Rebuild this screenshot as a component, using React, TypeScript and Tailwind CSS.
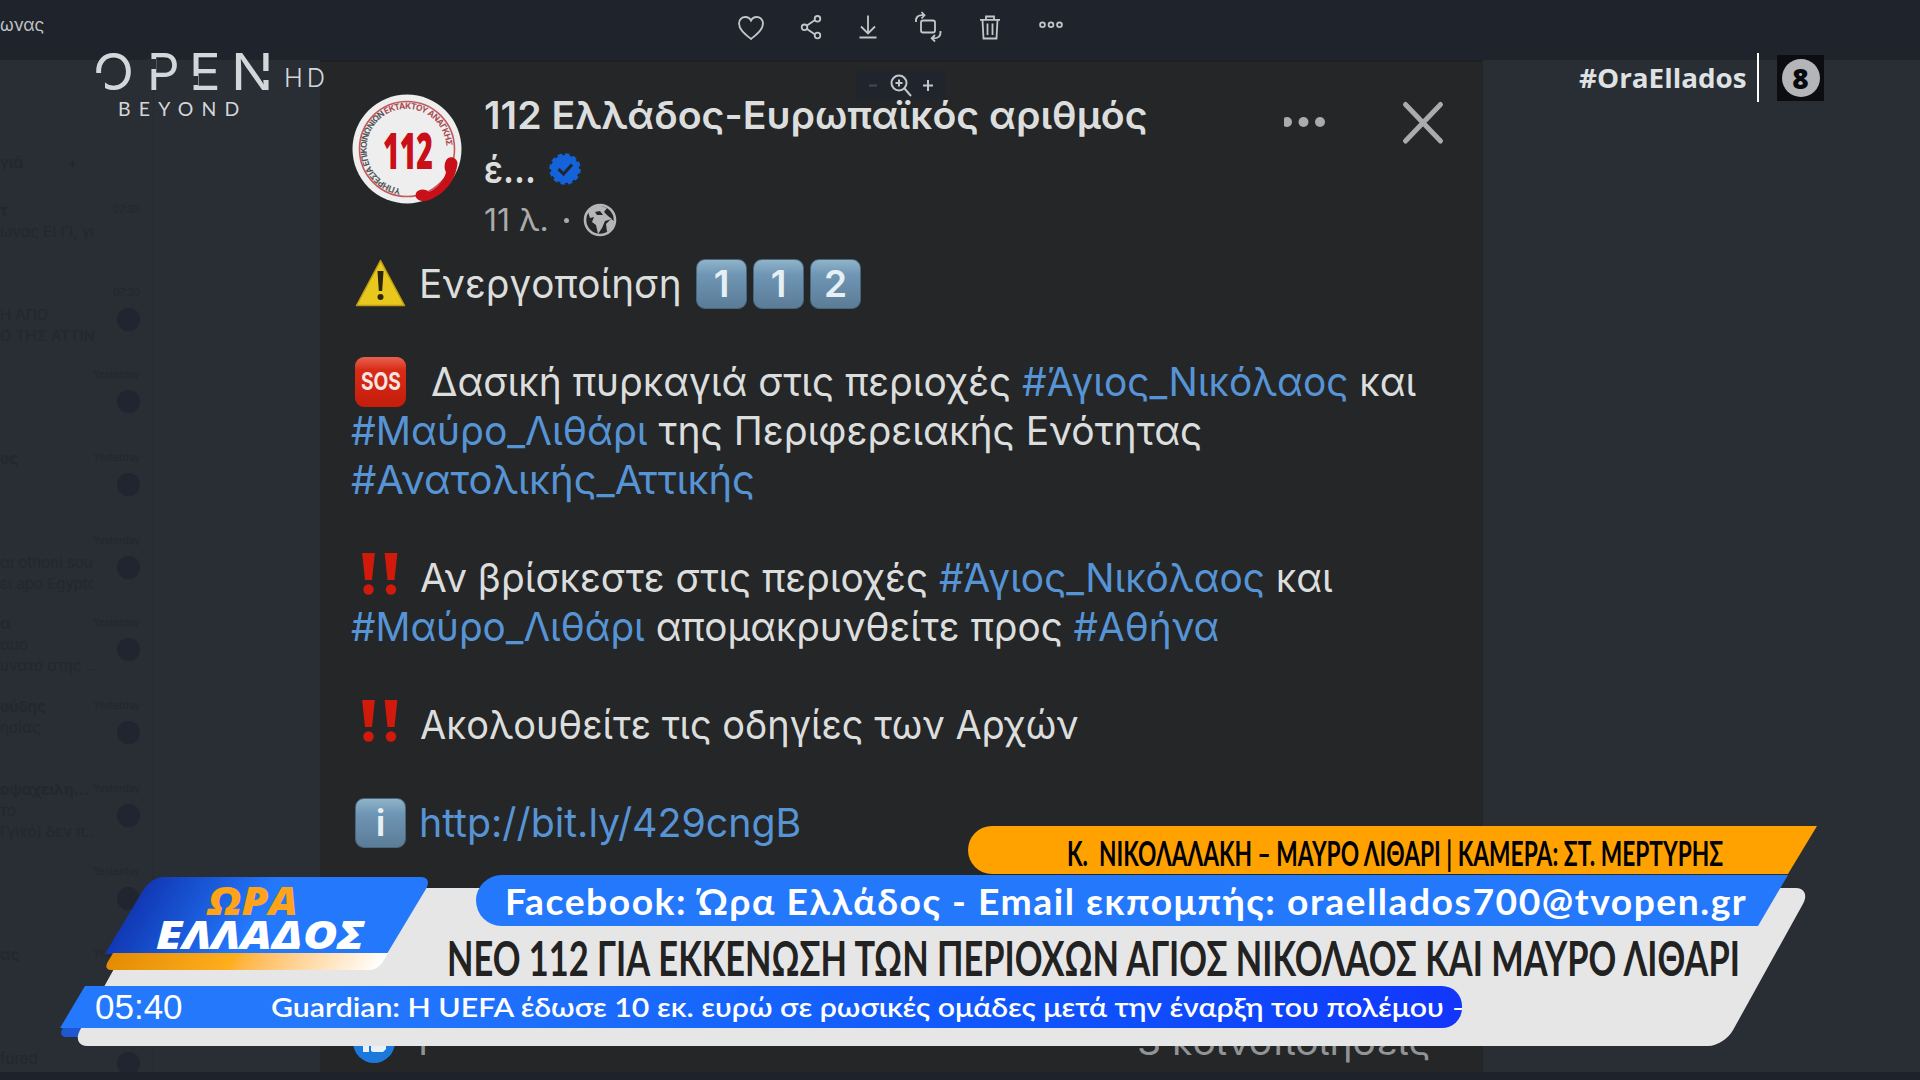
import { useLayoutEffect, useRef, useState } from "react";
import type { ReactNode } from "react";

// Squeezes (or stretches) a single line of text to a given width
function Fit({ width, className = "", children }: { width: number; className?: string; children: ReactNode }) {
    const ref = useRef<HTMLSpanElement>(null);
    const [scale, setScale] = useState(1);

    useLayoutEffect(() => {
        if (ref.current) setScale(width / ref.current.offsetWidth);
    }, [width]);

    return (
        <div className={`shrink-0 ${className}`} style={{ width }}>
            <span
                ref={ref}
                className="inline-block origin-left whitespace-pre"
                style={{ transform: `scaleX(${scale})` }}
            >
                {children}
            </span>
        </div>
    );
}

const chats = [
    { name: "τ", text: "ωνας ΕΙ ΓΙ, για", more: "", time: "07:39", badge: false },
    { name: "", text: "Η ΑΠΟ", more: "Ο ΤΗΣ ΑΤΤΙΝ...", time: "07:30", badge: true },
    { name: "", text: "", more: "", time: "Yesterday", badge: true },
    { name: "ος", text: "", more: "", time: "Yesterday", badge: true },
    { name: "", text: "αι othoni sou", more: "ει apo Egyptο", time: "Yesterday", badge: true },
    { name: "α", text: "αυο", more: "υνατό στης ...", time: "Yesterday", badge: true },
    { name: "ούδης", text: "ησίας", more: "", time: "Yesterday", badge: true },
    { name: "οψαχειλη...", text: "το", more: "Γγικό) δεν π...", time: "Yesterday", badge: true },
    { name: "", text: "", more: "", time: "Yesterday", badge: true },
    { name: "ας", text: "", more: "", time: "Yesterday", badge: true },
    { name: "", text: "fured", more: "", time: "", badge: true },
];

function Sidebar() {
    return (
        <aside className="w-[320px] shrink-0 overflow-hidden">
            <div className="w-[154px] border-r border-[#252a31] pt-[92px] text-[15px] text-[#22282d]">
                <div className="flex h-[48px] gap-11 font-semibold"><span>γιά</span><span>+</span></div>
                {chats.map((chat, i) => (
                    <div key={i} className="flex h-[82.7px] justify-between pr-[13px]">
                        <div className="w-[94px] overflow-hidden whitespace-nowrap leading-[21px]">
                            <p className="h-[21px] font-bold">{chat.name}</p>
                            <p className="h-[21px]">{chat.text}</p>
                            <p className="h-[21px]">{chat.more}</p>
                        </div>
                        <div className="flex flex-col items-end">
                            <span className="h-[25px] text-[10px] leading-[18px]">{chat.time}</span>
                            {chat.badge && <span className="size-[23px] rounded-full bg-[#20252f]" />}
                        </div>
                    </div>
                ))}
            </div>
        </aside>
    );
}

function TopBar() {
    return (
        <header className="flex h-[60px] items-start bg-[#1f242c] text-[#c3c6c9]">
            <div className="w-[738px] pt-[13px] text-[17px] leading-6">ωνας</div>
            <svg
                className="h-[54px] w-[340px]"
                viewBox="738 0 340 54"
                fill="none"
                stroke="currentColor"
                strokeWidth="1.8"
            >
                <path d="M751 39C745 34 739 29.500 739 23.500C739 19.500 742 17 745.300 17C748 17 750 18.500 751 20.500C752 18.500 754 17 756.700 17C760 17 763 19.500 763 23.500C763 29.500 757 34 751 39Z" />
                <path d="M807 25.500L815 20M807 29L815 34.500" />
                <circle cx="804.500" cy="27.300" r="2.800" />
                <circle cx="817.500" cy="18.800" r="2.800" />
                <circle cx="817.500" cy="35.500" r="2.800" />
                <path d="M868 15.500V33M861 26.500L868 33.500L875 26.500M859.500 37.500H876.500" />
                <rect x="921" y="20.500" width="14" height="12" rx="2" />
                <path d="M916 22C915.500 17 918 14.500 924 15.200M921.500 12L924.500 15.300L921.500 18.500M940.500 31C941 36.500 938 38.800 932 38.300M935 35L931.700 38.300L935 41.500" />
                <path d="M980 19.800H1000M986 19.500V16.500H994V19.500M982.500 20L983.500 38.500H996.500L997.500 20M987.500 23.500V35M992.500 23.500V35" />
                <circle cx="1042.500" cy="24.800" r="2.400" />
                <circle cx="1051" cy="24.800" r="2.400" />
                <circle cx="1059.500" cy="24.800" r="2.400" />
            </svg>
        </header>
    );
}

function Avatar() {
    return (
        <svg className="size-[110px] shrink-0" viewBox="0 0 110 110">
            <circle cx="55" cy="55" r="54.500" fill="#eeeeee" />
            <circle cx="55" cy="55" r="47.500" fill="none" stroke="#c4585d" strokeWidth="1.600" />
            <defs>
                <path id="ring" d="M49 94.500A40 40 0 1 1 94.500 56" />
            </defs>
            <text fontSize="8.500" fontWeight="700" fontFamily="Inter, sans-serif" fill="#555">
                <textPath href="#ring" textLength="180">
                    ΥΠΗΡΕΣΙΑ ΕΠΙΚΟΙΝΩΝΙΩΝ <tspan fill="#a84a50">ΕΚΤΑΚΤΟΥ ΑΝΑΓΚΗΣ</tspan>
                </textPath>
            </text>
            <text
                x="31"
                y="74.500"
                fontSize="49"
                fontWeight="900"
                fontFamily="'Open Sans', sans-serif"
                fill="#c90f17"
                textLength="50"
                lengthAdjust="spacingAndGlyphs"
            >
                112
            </text>
            <path
                d="M95 65C99 61 105 64 105.500 69C104 86 92 102 74 107C67 108 62 104 64 99C66 95 73 94 77 98C85 95 93 85 94 78C92 75 92 69 95 65Z"
                fill="#c90f17"
            />
        </svg>
    );
}

function Key({ children }: { children: ReactNode }) {
    return (
        <span className="flex h-[50px] w-[51px] shrink-0 items-center justify-center rounded-[9px] border border-[#48677d] bg-linear-to-b from-[#8fb4c9] via-[#6f96b5] via-30% to-[#5b7c97] text-[37px] font-semibold text-[#e6f0f4]">
            {children}
        </span>
    );
}

function Bangs() {
    return (
        <svg className="h-[49px] w-[51px] shrink-0" viewBox="0 0 51 49" fill="#cf1a0c">
            <path d="M7 -1H20L17 27H10Z" />
            <circle cx="13.500" cy="36.500" r="5.200" />
            <path d="M29.500 -1H42.500L39.500 27H32.500Z" />
            <circle cx="36" cy="36.500" r="5.200" />
        </svg>
    );
}

function Tag({ children }: { children: ReactNode }) {
    return <span className="text-[#5794d6]">{children}</span>;
}

function Post() {
    return (
        <main className="relative w-[1163px] shrink-0 overflow-hidden border-t-2 border-[#1d2122] bg-[#242627] pl-[32px] pt-[26px] text-[#dcdddd]">
            <div className="absolute left-[536px] top-[9px] h-[28px] w-[90px] bg-[#20252d]">
                <svg className="h-full w-full" viewBox="0 0 90 28" fill="none" stroke="#c3c6c9" strokeWidth="2">
                    <path d="M13 14.500H21" stroke="#444b50" />
                    <circle cx="43" cy="12" r="7.500" />
                    <path d="M48.500 17.500L55 25M43 8.500V15.500M39.500 12H46.500M67 14.500H77M72 9V20" />
                </svg>
            </div>

            <div className="flex">
                <div className="w-[132px] pt-[6px]"><Avatar /></div>
                <div className="relative w-[800px]">
                    <Fit width={664} className="h-[54px] text-[38.5px] font-semibold leading-[54px]">
                        112 Ελλάδος-Ευρωπαϊκός αριθμός
                    </Fit>
                    <div className="flex h-[54px] items-center text-[38.5px] font-semibold">
                        <Fit width={52} className="leading-[54px]">έ...</Fit>
                        <svg className="ml-[12px] size-[34px]" viewBox="0 0 34 34">
                            <circle cx="17" cy="17" r="14" fill="#1463d8" stroke="#1463d8" strokeWidth="3.500" strokeDasharray="4.400 2.890" />
                            <path d="M10.500 17L15.500 22L24 12.500" fill="none" stroke="#202630" strokeWidth="3" />
                        </svg>
                    </div>
                    <div className="flex h-[48px] items-center text-[31px] text-[#a9abac]">
                        <Fit width={65} className="leading-[48px]">11 λ.</Fit>
                        <span className="ml-[15px] size-[5px] rounded-full bg-[#a9abac]" />
                        <svg className="ml-[14px] size-[34px]" viewBox="0 0 34 34">
                            <circle cx="17" cy="17" r="15" fill="#242627" stroke="#b4b6b7" strokeWidth="2.600" />
                            <path d="M5 9C8 4 13 2 18 3L24 5L21 9L25 13L29 16L22 18L19 25L15 31L13 22L9 19L11 14L7 15Z" fill="#b4b6b7" />
                            <path d="M12 9L17 8L20 12L14 12Z" fill="#242627" />
                            <path d="M23 21L28 16L31 18C31 23 28 27 24 29Z" fill="#b4b6b7" />
                        </svg>
                    </div>
                </div>
                <svg className="h-[68px] w-[164px]" viewBox="0 0 164 68" fill="#a9abac">
                    <circle cx="3" cy="34" r="5" />
                    <circle cx="19.500" cy="34" r="5" />
                    <circle cx="36" cy="34" r="5" />
                    <path d="M121.500 16.500L156.500 53M156.500 16.500L121.500 53" stroke="#a9abac" strokeWidth="5" strokeLinecap="round" />
                </svg>
            </div>

            <div className="mt-[15px] pl-[3px] text-[40px] leading-[49px] [&>div]:flex [&>div]:h-[49px] [&>div]:items-center">
                <div>
                    <svg className="h-[49px] w-[51px] shrink-0" viewBox="0 0 51 49">
                        <path d="M25.500 1.500L49.500 46.500H1.500Z" fill="#e8c81d" stroke="#bb9c12" strokeWidth="1.500" strokeLinejoin="round" />
                        <path d="M22.500 12H28.500L27.200 32H23.800Z" fill="#2b2410" />
                        <circle cx="25.500" cy="38" r="3" fill="#2b2410" />
                    </svg>
                    <Fit width={263} className="ml-[13px]">Ενεργοποίηση</Fit>
                    <div className="ml-[14px] flex gap-[6px]">
                        <Key>1</Key>
                        <Key>1</Key>
                        <Key>2</Key>
                    </div>
                </div>
                <div />
                <div>
                    <span className="flex h-[50px] w-[51px] shrink-0 items-center justify-center rounded-[9px] bg-linear-to-b from-[#e8604d] via-[#d92c17] via-25% to-[#c41d0b] text-[#f5e4e1]">
                        <Fit width={40} className="text-[24px] font-bold">SOS</Fit>
                    </span>
                    <Fit width={985} className="ml-[25px]">
                        Δασική πυρκαγιά στις περιοχές <Tag>#Άγιος_Νικόλαος</Tag> και
                    </Fit>
                </div>
                <div>
                    <Fit width={851} className="-ml-[4px]"><Tag>#Μαύρο_Λιθάρι</Tag> της Περιφερειακής Ενότητας</Fit>
                </div>
                <div>
                    <Fit width={404} className="-ml-[4px]"><Tag>#Ανατολικής_Αττικής</Tag></Fit>
                </div>
                <div />
                <div>
                    <Bangs />
                    <Fit width={913} className="ml-[14px]">
                        Αν βρίσκεστε στις περιοχές <Tag>#Άγιος_Νικόλαος</Tag> και
                    </Fit>
                </div>
                <div>
                    <Fit width={868} className="-ml-[4px]">
                        <Tag>#Μαύρο_Λιθάρι</Tag> απομακρυνθείτε προς <Tag>#Αθήνα</Tag>
                    </Fit>
                </div>
                <div />
                <div>
                    <Bangs />
                    <Fit width={659} className="ml-[14px]">Ακολουθείτε τις οδηγίες των Αρχών</Fit>
                </div>
                <div />
                <div>
                    <Key>i</Key>
                    <Fit width={382} className="ml-[13px]"><Tag>http://bit.ly/429cngB</Tag></Fit>
                </div>
            </div>

            <div className="mt-[173px] flex h-[44px] items-center text-[37px] text-[#919394]">
                <svg className="size-[44px]" viewBox="0 0 44 44">
                    <circle cx="22" cy="22" r="21" fill="#1d78dc" />
                    <rect x="11" y="18" width="6" height="14" fill="#e9f1f8" />
                    <path d="M19 31V19L23 9H26V17H34V29L31 32H21Z" fill="#e9f1f8" />
                </svg>
                <span className="ml-[17px] w-[724px]">1</span>
                <Fit width={294}>3 κοινοποιήσεις</Fit>
            </div>
        </main>
    );
}

function ChannelLogo() {
    return (
        <div className="absolute left-[93px] top-[48px] text-[#d4d7da]">
            <div className="flex h-[48px] text-[51px] leading-[48px]">
                <div className="relative w-[54px]">
                    <Fit width={41}>O</Fit>
                    <span className="absolute left-0 top-[25px] h-[19px] w-[12px] bg-[#292d34]" />
                </div>
                <div className="relative w-[42px]">
                    <Fit width={33}>P</Fit>
                    <span className="absolute left-0 top-[11px] h-[10px] w-[9px] bg-[#292d34]" />
                </div>
                <div className="relative w-[42px]">
                    <Fit width={32}>E</Fit>
                    <span className="absolute left-0 top-[28px] h-[9px] w-[9px] bg-[#292d34]" />
                </div>
                <div className="relative w-[53px]">
                    <Fit width={42}>N</Fit>
                    <span className="absolute left-[31px] top-[23px] h-[9px] w-[9px] bg-[#292d34]" />
                </div>
                <Fit width={45} className="pt-[6px] text-[26px] font-light tracking-[4px]">HD</Fit>
            </div>
            <Fit width={130} className="ml-[25px] h-[26px] font-[Lato] text-[19px] leading-[26px] tracking-[8px]">BEYOND</Fit>
        </div>
    );
}

function Hashtag() {
    return (
        <div className="absolute left-[1579px] top-[53px] flex h-[49px] items-center">
            <Fit width={168} className="font-['Open_Sans'] text-[27px] font-bold leading-[49px] text-[#dfe1e3]">#OraEllados</Fit>
            <span className="ml-[10px] h-full w-[2px] bg-white" />
            <span className="ml-[18px] flex h-[46px] w-[47px] items-center justify-center bg-[#0b0d10]">
                <span className="flex size-[38px] items-center justify-center rounded-full bg-[#b4b5b9] font-['Open_Sans'] text-[28px] font-extrabold leading-none text-[#08090b]">
                    8
                </span>
            </span>
        </div>
    );
}

// Banner at the bottom, drawn over the post
function LowerThird() {
    return (
        <div className="absolute left-0 top-[826px] h-[220px] w-full font-[Lato,Inter]">
            <div className="absolute left-[72px] top-[160px] h-[51px] w-[400px] -skew-x-[29deg] rounded-[8px] bg-[#1d58d0]" />
            <div className="absolute left-[115px] top-[62px] h-[158px] w-[1653px] -skew-x-[29deg] rounded-[16px] bg-[#e6e6e6]" />

            <div className="absolute left-[968px] top-0 h-[48px] w-[849px] rounded-l-[24px] bg-[#ffa200] pl-[99px] text-black [clip-path:polygon(0_0,100%_0,calc(100%-29px)_100%,0_100%)]">
                <Fit width={656} className="text-[35px] font-bold leading-[52px]">
                    Κ.  ΝΙΚΟΛΑΛΑΚΗ – ΜΑΥΡΟ ΛΙΘΑΡΙ | ΚΑΜΕΡΑ: ΣΤ. ΜΕΡΤΥΡΗΣ
                </Fit>
            </div>

            <div className="absolute left-[476px] top-[49px] h-[51px] w-[1312px] rounded-l-full bg-[#2478fc] pl-[29px] text-white [clip-path:polygon(0_0,100%_0,calc(100%-30px)_100%,0_100%)]">
                <Fit width={1242} className="text-[37px] font-bold leading-[51px] tracking-[1.5px]">
                    Facebook: Ώρα Ελλάδος - Email εκπομπής: oraellados700@tvopen.gr
                </Fit>
            </div>

            <Fit width={1293} className="absolute left-[447px] top-[104px] text-[47px] font-bold leading-[56px] text-[#222222]">
                ΝΕΟ 112 ΓΙΑ ΕΚΚΕΝΩΣΗ ΤΩΝ ΠΕΡΙΟΧΩΝ ΑΓΙΟΣ ΝΙΚΟΛΑΟΣ ΚΑΙ ΜΑΥΡΟ ΛΙΘΑΡΙ
            </Fit>

            <div className="absolute left-[60px] top-[160px] flex h-[42px] w-[1402px] items-center overflow-hidden rounded-r-[20px] bg-linear-to-r from-[#2478fc] from-20% to-[#1236fb] pl-[35px] text-white [clip-path:polygon(25px_0,100%_0,100%_100%,0_100%)]">
                <Fit width={88} className="font-['Liberation_Sans'] text-[35px] leading-[42px]">05:40</Fit>
                <Fit width={1198} className="ml-[88px] text-[27px] font-semibold leading-[42px]">
                    Guardian: Η UEFA έδωσε 10 εκ. ευρώ σε ρωσικές ομάδες μετά την έναρξη του πολέμου –
                </Fit>
            </div>

            <div className="absolute left-[128px] top-[51px] h-[77px] w-[282px] -skew-x-[31deg] rounded-t-[12px] bg-linear-to-r from-[#1238b4] to-[#2478fc] to-45%" />
            <div className="absolute left-[108px] top-[127px] h-[17px] w-[275px] -skew-x-[31deg] rounded-b-[8px] bg-linear-to-r from-[#e38c03] via-[#ffae1c] via-45% to-white" />
            <div className="absolute left-[156px] top-[57px] font-['Open_Sans'] text-[39px] font-extrabold italic leading-[34px]">
                <Fit width={90} className="ml-[52px] text-[#ffa31a]">ΩΡΑ</Fit>
                <Fit width={208} className="text-white">ΕΛΛΑΔΟΣ</Fit>
            </div>
        </div>
    );
}

export default function App() {
    return (
        <div className="relative h-[1080px] w-[1920px] overflow-hidden bg-[#292d34] font-[Inter,sans-serif]">
            <TopBar />
            <div className="flex h-[1012px]">
                <Sidebar />
                <Post />
            </div>
            <div className="h-[8px] bg-[#1e232b]" />

            <ChannelLogo />
            <Hashtag />
            <LowerThird />
        </div>
    );
}
